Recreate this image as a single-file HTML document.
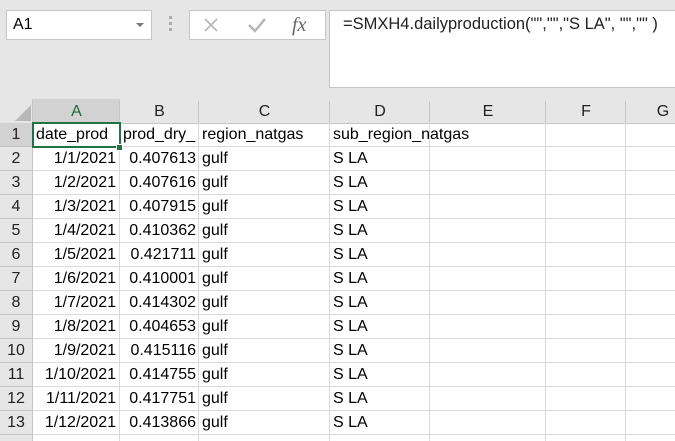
<!DOCTYPE html>
<html><head><style>
*{margin:0;padding:0;box-sizing:border-box}
html,body{width:675px;height:441px;overflow:hidden}
body{background:#e6e6e6;font-family:"Liberation Sans",sans-serif;position:relative;font-size:16px;color:#000}
.a{position:absolute}
.cell{position:absolute;height:24px;line-height:24px;white-space:nowrap;overflow:hidden;font-size:16px}
</style></head><body>
<div class="a" style="left:6px;top:10px;width:146px;height:30px;background:#fff;border:1px solid #c6c6c6;"></div>
<div class="a" style="left:13px;top:10px;line-height:30px;font-size:16px;">A1</div>
<div class="a" style="left:136px;top:23px;width:0;height:0;border-left:4px solid transparent;border-right:4px solid transparent;border-top:4px solid #777"></div>
<div class="a" style="left:169px;top:16px;width:3px;height:3px;background:#aaa;box-shadow:0 6px 0 #aaa,0 12px 0 #aaa"></div>
<div class="a" style="left:189px;top:10px;width:137px;height:30px;background:#fff;border:1px solid #c6c6c6;"></div>
<svg class="a" style="left:200px;top:14px" width="120" height="22"><path d="M5 5L17 17M17 5L5 17" stroke="#b5b5b5" stroke-width="1.6"/><path d="M49 11L55 17L65 5" stroke="#b5b5b5" stroke-width="2.4" fill="none"/><text x="92" y="17" font-family="Liberation Serif" font-style="italic" font-size="20" fill="#666">fx</text></svg>
<div class="a" style="left:329px;top:10px;width:350px;height:78px;background:#fff;border:1px solid #c6c6c6;"></div>
<div class="a" style="left:343px;top:15px;font-size:16.5px;color:#222;white-space:nowrap">=SMXH4.dailyproduction("","","S LA", "","" )</div>
<div class="a" style="left:0;top:99px;width:675px;height:342px;background:#fff"></div>
<div id="g"></div>
<script>
var cols=[33,120,199,330,430,546,626,700],names="ABCDEFG";
var h='';
h+='<div class="a" style="left:0;top:99px;width:675px;height:25px;background:#e6e6e6;border-bottom:1px solid #c6c6c6"></div>';
h+='<div class="a" style="left:0;top:99px;width:33px;height:342px;background:#e6e6e6;border-right:1px solid #c6c6c6"></div>';
h+='<svg class="a" style="left:14px;top:104px" width="18" height="18"><path d="M17 1L17 17L1 17Z" fill="#b8b8b8"/></svg>';
h+='<div class="a" style="left:33px;top:99px;width:87px;height:25px;background:#d2d2d2;border-bottom:2px solid #217346"></div>';
h+='<div class="a" style="left:0;top:123px;width:33px;height:24px;background:#d2d2d2"></div>';
for(var i=0;i<7;i++){var l=cols[i],w=cols[i+1]-l;
h+='<div class="a" style="left:'+(l+w-1)+'px;top:101px;width:1px;height:22px;background:#c6c6c6"></div>';
h+='<div class="a" style="left:'+l+'px;top:101px;width:'+w+'px;text-align:center;line-height:22px;font-size:16px;color:'+(i==0?'#1e6b40':'#222')+'">'+names[i]+'</div>';
h+='<div class="a" style="left:'+(l+w-1)+'px;top:123px;width:1px;height:320px;background:#dadada"></div>';}
var v=["0.407613","0.407616","0.407915","0.410362","0.421711","0.410001","0.414302","0.404653","0.415116","0.414755","0.417751","0.413866"];
for(var r=0;r<14;r++){var t=123+r*24;
h+='<div class="a" style="left:33px;top:'+(t+23)+'px;width:675px;height:1px;background:#dadada"></div>';
h+='<div class="a" style="left:0;top:'+(t+23)+'px;width:33px;height:1px;background:#c6c6c6"></div>';
if(r<13)h+='<div class="cell" style="left:0;top:'+t+'px;width:32px;text-align:center;font-size:16px;color:#222">'+(r+1)+'</div>';
if(r==0){h+='<div class="cell" style="left:36px;top:'+t+'px">date_prod</div><div class="cell" style="left:123px;top:'+t+'px;width:76px">prod_dry_</div><div class="cell" style="left:202px;top:'+t+'px">region_natgas</div><div class="cell" style="left:333px;top:'+t+'px">sub_region_natgas</div>';}
else if(r<13){h+='<div class="cell" style="left:33px;top:'+t+'px;width:83px;text-align:right">1/'+r+'/2021</div><div class="cell" style="left:120px;top:'+t+'px;width:76px;text-align:right">'+v[r-1]+'</div><div class="cell" style="left:202px;top:'+t+'px">gulf</div><div class="cell" style="left:333px;top:'+t+'px">S LA</div>';}}
h+='<div class="a" style="left:32px;top:122px;width:89px;height:26px;border:2px solid #217346"></div>';
h+='<div class="a" style="left:116px;top:144px;width:7px;height:7px;background:#217346;border:1px solid #fff"></div>';
document.getElementById('g').innerHTML=h;
</script>
</body></html>
